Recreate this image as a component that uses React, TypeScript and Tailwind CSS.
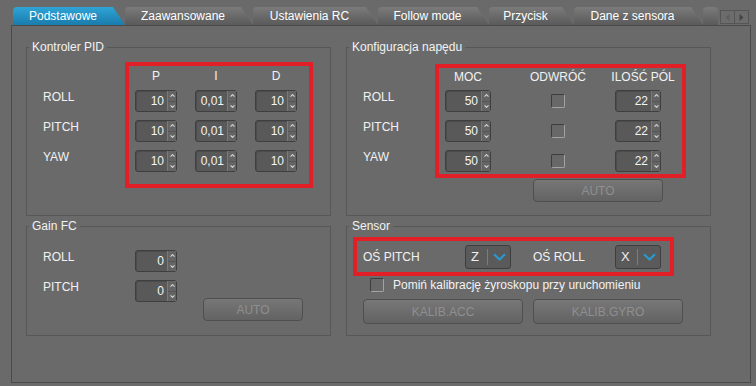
import type { ReactNode } from "react";

const tabs = [
  { label: "Podstawowe", w: "w-[112px]", active: true },
  { label: "Zaawansowane", w: "w-[128px]" },
  { label: "Ustawienia RC", w: "w-[125px]" },
  { label: "Follow mode", w: "w-[111px]" },
  { label: "Przycisk", w: "w-[85px]" },
  { label: "Dane z sensora", w: "w-[129px]" },
];

const axes = ["ROLL", "PITCH", "YAW"];

function Chevron({ up }: { up?: boolean }) {
  return (
    <svg width="5" height="3" viewBox="0 0 5 3">
      <path
        d={up ? "M0.5 2.6 L2.5 0.6 L4.5 2.6" : "M0.5 0.4 L2.5 2.4 L4.5 0.4"}
        stroke="#d6d6d6"
        strokeWidth="1.1"
        fill="none"
      />
    </svg>
  );
}

function Spinner({ value, w = "w-[42px]" }: { value: string; w?: string }) {
  return (
    <div className={`flex h-[22px] ${w} shrink-0 rounded-[3px] border border-[#3f3f3f] bg-[#595959] shadow-[inset_1px_1px_0_#4c4c4c]`}>
      <span className="flex-1 pr-[3px] text-right text-[12px] leading-[20px] text-[#f4f4f4]">{value}</span>
      <div className="flex w-[9px] flex-col border-l border-[#7a7a7a] bg-[#646464]">
        <div className="flex flex-1 items-center justify-center border-b border-[#555555]">
          <Chevron up />
        </div>
        <div className="flex flex-1 items-center justify-center">
          <Chevron />
        </div>
      </div>
    </div>
  );
}

function Checkbox() {
  return (
    <div className="h-[14px] w-[14px] shrink-0 rounded-[2px] border border-t-[#3d3d3d] border-l-[#3d3d3d] border-r-[#a2a2a2] border-b-[#a2a2a2] bg-[#686868]" />
  );
}

function Dropdown({ value }: { value: string }) {
  return (
    <div className="flex h-[24px] w-[46px] shrink-0 items-center rounded-[3px] border border-[#3e3e3e] bg-[#5a5a5a]">
      <span className="w-[21px] pl-[5px] text-[13px] leading-[22px] text-[#f0f0f0]">{value}</span>
      <div className="h-[16px] w-px bg-[#7c7c7c]" />
      <div className="flex flex-1 items-center justify-center">
        <svg width="13" height="8" viewBox="0 0 13 8">
          <path d="M1 1.2 L6.5 6.5 L12 1.2" stroke="#2b98cc" strokeWidth="2.2" fill="none" />
        </svg>
      </div>
    </div>
  );
}

function Button({ label, cls }: { label: string; cls: string }) {
  return (
    <div className={`flex shrink-0 items-center justify-center rounded-[4px] border border-[#4f4f4f] bg-linear-to-b from-[#777777] to-[#636363] text-[12px] text-[#8f8f8f] ${cls}`}>
      {label}
    </div>
  );
}

function GroupBox({ title, className, children }: { title: string; className: string; children: ReactNode }) {
  return (
    <div className={`relative border border-[#575757] ${className}`}>
      <span className="absolute left-[2px] top-[-8px] bg-[#6a6a6a] px-[3px] text-[12px] leading-[14px] text-[#f2f2f2]">
        {title}
      </span>
      {children}
    </div>
  );
}

function Labels({ items, cls }: { items: string[]; cls: string }) {
  return (
    <div className={`flex shrink-0 flex-col gap-[16px] pl-[16px] ${cls}`}>
      {items.map((l) => (
        <span key={l} className="h-[14px] text-[12px] leading-[14px] text-[#f2f2f2]">
          {l}
        </span>
      ))}
    </div>
  );
}

export default function App() {
  return (
    <div className="h-[386px] w-[756px] overflow-hidden bg-[#6a6a6a] font-['Liberation_Sans',Arial,sans-serif]">
      {/* tab strip */}
      <div className="flex h-[25px] items-end pl-[13px]">
        {tabs.map((t) => (
          <div
            key={t.label}
            className={`flex h-[18px] ${t.w} shrink-0 items-center justify-center rounded-tl-[4px] pr-[12px] text-[12px] text-white [clip-path:polygon(0_0,calc(100%_-_12px)_0,100%_100%,0_100%)] ${
              t.active
                ? "bg-linear-to-b from-[#2fa4d6] to-[#197cad]"
                : "bg-linear-to-b from-[#7b7b7b] to-[#5a5a5a]"
            }`}
          >
            {t.label}
          </div>
        ))}
        <div className="h-[18px] w-[15px] shrink-0 rounded-t-[4px] bg-linear-to-b from-[#7b7b7b] to-[#5a5a5a]" />
        <div className="mb-[1px] ml-[2px] flex h-[14px] w-[29px] shrink-0 border border-[#555555] bg-[#6c6c6c]">
          <div className="flex flex-1 items-center justify-center border-r border-[#555555]">
            <svg width="5" height="7" viewBox="0 0 5 7">
              <path d="M4.5 0 L0.5 3.5 L4.5 7 Z" fill="#5e5e5e" />
            </svg>
          </div>
          <div className="flex flex-1 items-center justify-center">
            <svg width="5" height="7" viewBox="0 0 5 7">
              <path d="M0.5 0 L4.5 3.5 L0.5 7 Z" fill="#444444" />
            </svg>
          </div>
        </div>
      </div>

      {/* panel */}
      <div className="ml-[11px] h-[358px] w-[740px] border border-[#4a4a4a] pl-[14px] pt-[21px]">
        <div className="grid grid-cols-[305px_365px] grid-rows-[169px_110px] gap-x-[15px] gap-y-[10px]">
          <GroupBox title="Kontroler PID" className="">
            <div className="flex">
              <Labels items={axes} cls="w-[98px] pt-[42px]" />
              <div className="mt-[14px] h-[126px] w-[188px] border-[4px] border-[#e21f26] pl-[6px] pt-[3px]">
                <div className="mb-[7px] flex h-[14px] gap-[18px] text-[12px] leading-[14px] text-[#f2f2f2]">
                  {["P", "I", "D"].map((h) => (
                    <span key={h} className="w-[42px] text-center">
                      {h}
                    </span>
                  ))}
                </div>
                <div className="flex flex-col gap-[8px]">
                  {axes.map((a) => (
                    <div key={a} className="flex gap-[18px]">
                      <Spinner value="10" />
                      <Spinner value="0,01" />
                      <Spinner value="10" />
                    </div>
                  ))}
                </div>
              </div>
            </div>
          </GroupBox>

          <GroupBox title="Konfiguracja napędu" className="">
            <div className="flex">
              <Labels items={axes} cls="w-[88px] pt-[42px]" />
              <div className="flex flex-col">
                <div className="mt-[16px] h-[114px] w-[251px] border-[4px] border-[#e21f26] pl-[6px] pt-[2px]">
                  <div className="mb-[6px] flex h-[14px] text-[12px] leading-[14px] text-[#f2f2f2]">
                    <span className="w-[46px] shrink-0 text-center">MOC</span>
                    <span className="ml-[16px] w-[102px] shrink-0 text-center">ODWRÓĆ</span>
                    <span className="w-[68px] shrink-0 whitespace-nowrap text-center">ILOŚĆ PÓL</span>
                  </div>
                  <div className="flex flex-col gap-[8px]">
                    {axes.map((a) => (
                      <div key={a} className="flex h-[22px] items-center">
                        <Spinner value="50" w="w-[46px]" />
                        <div className="ml-[60px]">
                          <Checkbox />
                        </div>
                        <div className="ml-[50px]">
                          <Spinner value="22" w="w-[46px]" />
                        </div>
                      </div>
                    ))}
                  </div>
                </div>
                <Button label="AUTO" cls="ml-[98px] mt-[1px] h-[23px] w-[130px]" />
              </div>
            </div>
          </GroupBox>

          <GroupBox title="Gain FC" className="">
            <div className="flex">
              <Labels items={["ROLL", "PITCH"]} cls="w-[108px] pt-[23px]" />
              <div className="flex flex-col gap-[8px] pt-[23px]">
                <Spinner value="0" />
                <Spinner value="0" />
              </div>
              <Button label="AUTO" cls="ml-[26px] mt-[71px] h-[23px] w-[100px]" />
            </div>
          </GroupBox>

          <GroupBox title="Sensor" className="">
            <div className="flex flex-col pl-[6px] pt-[10px]">
              <div className="flex h-[39px] w-[321px] items-center border-[4px] border-[#e21f26] pl-[6px] text-[12px] text-[#f2f2f2]">
                <span className="w-[102px] shrink-0">OŚ PITCH</span>
                <Dropdown value="Z" />
                <span className="ml-[22px] w-[82px] shrink-0">OŚ ROLL</span>
                <Dropdown value="X" />
              </div>
              <div className="ml-[17px] mt-[2px] flex h-[14px] items-center gap-[9px]">
                <Checkbox />
                <span className="text-[12px] leading-[14px] text-[#f2f2f2]">Pomiń kalibrację żyroskopu przy uruchomieniu</span>
              </div>
              <div className="ml-[10px] mt-[7px] flex gap-[10px]">
                <Button label="KALIB.ACC" cls="h-[25px] w-[160px]" />
                <Button label="KALIB.GYRO" cls="h-[25px] w-[150px]" />
              </div>
            </div>
          </GroupBox>
        </div>
      </div>
    </div>
  );
}
